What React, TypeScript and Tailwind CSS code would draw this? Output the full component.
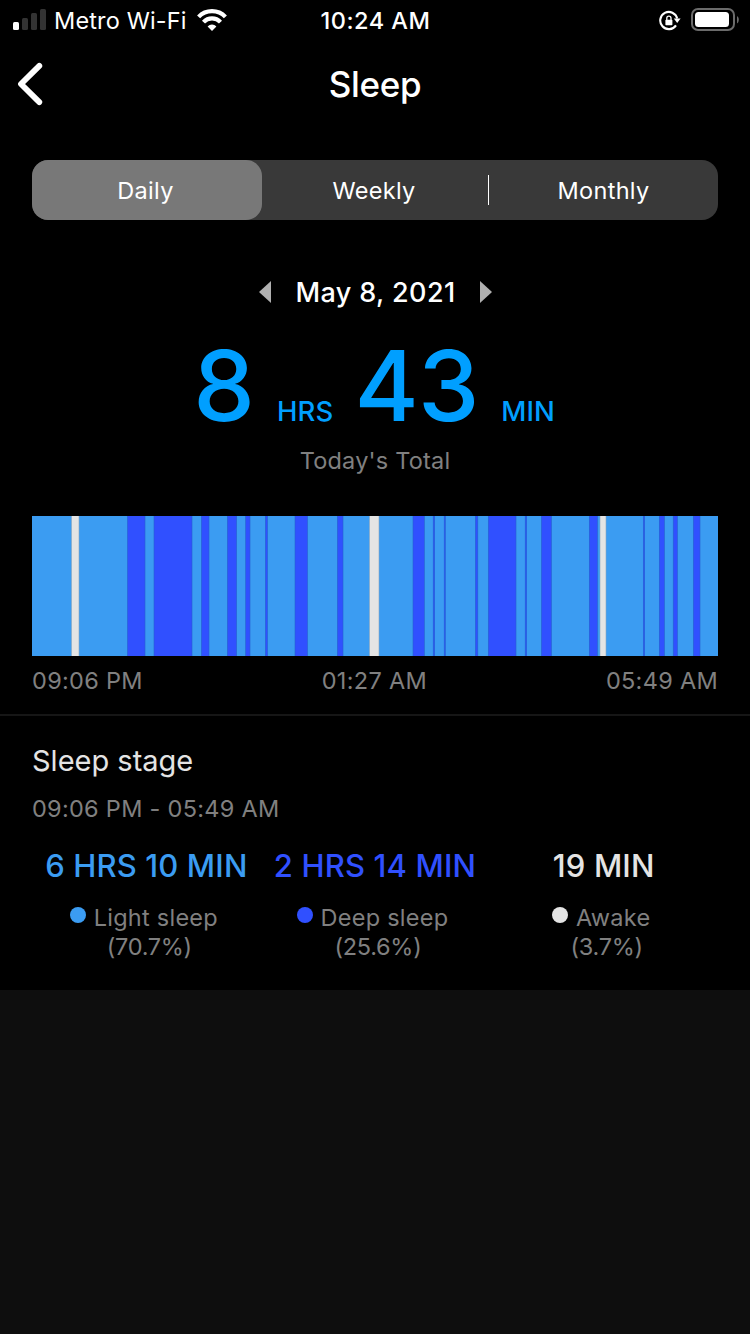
import { useState } from "react";

type Stage = "deep" | "awake";

const stageColors = {
  deep: "#3050ff",
  awake: "#e4e4e4",
};

const edgeColors = {
  deep: "#2560d0",
  awake: "#8aa6bd",
};

// everything that is not listed here is light sleep
const segments: [number, number, Stage][] = [
  [39.5, 47, "awake"],
  [95.5, 113, "deep"],
  [122, 160, "deep"],
  [169.4, 177, "deep"],
  [195.4, 204.6, "deep"],
  [213.7, 218, "deep"],
  [233.4, 235.5, "deep"],
  [263, 275.5, "deep"],
  [305.4, 311, "deep"],
  [337.5, 347, "awake"],
  [381, 392.3, "deep"],
  [401.2, 402.7, "deep"],
  [412.2, 413.3, "deep"],
  [443.4, 445.8, "deep"],
  [456.3, 484, "deep"],
  [493.2, 494.7, "deep"],
  [509.4, 519.4, "deep"],
  [557.3, 565.4, "deep"],
  [568, 574, "awake"],
  [611.3, 612.7, "deep"],
  [627.3, 632.4, "deep"],
  [641.2, 645.4, "deep"],
  [661.3, 668, "deep"],
];

const stages = [
  {
    name: "Light sleep",
    value: "6 HRS 10 MIN",
    percent: "(70.7%)",
    text: "text-[#3b9cf2]",
    dot: "bg-[#3b9cf2]",
  },
  {
    name: "Deep sleep",
    value: "2 HRS 14 MIN",
    percent: "(25.6%)",
    text: "text-[#3050ff]",
    dot: "bg-[#3050ff]",
  },
  {
    name: "Awake",
    value: "19 MIN",
    percent: "(3.7%)",
    text: "text-[#e4e4e4]",
    dot: "bg-[#e4e4e4]",
  },
];

const tabs = [
  { name: "Daily", className: "w-[230px] pr-[3px]" },
  { name: "Weekly", className: "w-[226px] pr-[2px]" },
  { name: "Monthly", className: "w-[230px]" },
];

function StatusBar() {
  return (
    <div className="flex h-[41px] items-center justify-between pr-[11px] pl-[13px] text-white">
      <div className="flex w-[299px] items-center">
        <svg width="33" height="21" viewBox="0 0 33 21" className="mr-[8px] mb-[2px]">
          <rect x="0" y="13" width="6" height="8" rx="1.5" fill="#fff" />
          <rect x="9" y="9" width="6" height="12" rx="1.5" fill="#333" />
          <rect x="18" y="4" width="6" height="17" rx="1.5" fill="#333" />
          <rect x="27" y="0" width="6" height="21" rx="1.5" fill="#333" />
        </svg>
        <span className="text-[23.5px] tracking-[0.15px]">Metro Wi-Fi</span>
        <svg width="30" height="22" viewBox="0 0 30 22" className="mb-px ml-[10px]">
          <g fill="none" stroke="#fff" strokeWidth="4.2">
            <path d="M1.600 7.900a18.600 18.600 0 0 1 26.800 0" />
            <path d="M6.500 13.100a11.700 11.700 0 0 1 17 0" />
          </g>
          <path d="M15 22l-4.400-4.600a6.200 6.200 0 0 1 8.800 0z" fill="#fff" />
        </svg>
      </div>
      <span className="text-[23.5px] font-medium tracking-[0.5px]">
        10:24 AM
      </span>
      <div className="flex w-[300px] items-center justify-end">
        <svg width="22" height="22" viewBox="0 0 22 22" className="mr-[10px]">
          <path
            d="M17 15.300A8.600 8.600 0 1 1 18.200 8.500"
            fill="none"
            stroke="#fff"
            strokeWidth="2.1"
          />
          <path d="M14.800 8.500h6.800l-3.400 4.400z" fill="#fff" />
          <rect x="6.400" y="9.800" width="7" height="5.400" rx="0.8" fill="#fff" />
          <path
            d="M7.800 10V8.200a2.100 2.100 0 0 1 4.200 0V10"
            fill="none"
            stroke="#fff"
            strokeWidth="1.3"
          />
        </svg>
        <svg width="48" height="23" viewBox="0 0 48 23" className="mb-[2px]">
          <rect
            x="1"
            y="1"
            width="42"
            height="21"
            rx="6"
            fill="none"
            stroke="#6b6b6b"
            strokeWidth="2"
          />
          <rect x="4" y="4" width="34" height="15" rx="3.5" fill="#fff" />
          <path d="M46 8c2.400 1.400 2.400 6 0 7.400z" fill="#6b6b6b" />
        </svg>
      </div>
    </div>
  );
}

function Header() {
  return (
    <header className="grid h-[86px] grid-cols-[1fr_auto_1fr] items-center text-white">
      <button className="pl-[17px]" aria-label="Back">
        <svg width="28" height="44" viewBox="0 0 28 44">
          <path
            d="M22.300 3.900L4 22l18.300 18.100"
            fill="none"
            stroke="#fff"
            strokeWidth="5.8"
            strokeLinecap="round"
            strokeLinejoin="round"
          />
        </svg>
      </button>
      <h1 className="text-[35px] font-medium tracking-[-0.3px]">Sleep</h1>
    </header>
  );
}

function Tabs() {
  const [active, setActive] = useState("Daily");

  return (
    <div className="mx-8 mt-[33px] flex h-[60px] items-center rounded-2xl bg-[#393939] text-[23.5px] leading-[30px] tracking-[0.3px] text-white">
      {tabs.map((tab) => (
        <button
          key={tab.name}
          onClick={() => setActive(tab.name)}
          className={`${tab.className} ${
            tab.name === active
              ? "h-full rounded-2xl bg-[#787878] pt-[2px]"
              : "h-[30px] border-white pt-px last:border-l"
          }`}
        >
          {tab.name}
        </button>
      ))}
    </div>
  );
}

function Total() {
  return (
    <section className="flex flex-col items-center">
      <div className="mt-[52px] flex h-[40px] items-center pl-px">
        <svg width="12" height="22" viewBox="0 0 12 22">
          <path d="M12 0v22L0 11z" fill="#b0b0b0" />
        </svg>
        <span className="mx-[24px] h-[40px] text-[27px] leading-[41px] font-medium tracking-[0.4px] text-white">
          May 8, 2021
        </span>
        <svg width="12" height="22" viewBox="0 0 12 22">
          <path d="M0 0v22l12-11z" fill="#b0b0b0" />
        </svg>
      </div>
      <div className="mt-[24px] flex h-[100px] items-baseline pr-[2px] text-[#009fff]">
        <span className="text-[98px] leading-[100px] font-medium tracking-[-1px]">8</span>
        <span className="mr-[21px] ml-[23px] text-[27.5px] font-[450] tracking-[0.2px]">HRS</span>
        <span className="text-[98px] leading-[100px] font-medium tracking-[-1px]">43</span>
        <span className="ml-[23px] text-[27.5px] font-[450]">MIN</span>
      </div>
      <p className="mt-[10px] text-[23.5px] leading-[30px] tracking-[0.2px] text-[#808080]">
        Today's Total
      </p>
    </section>
  );
}

function Chart() {
  return (
    <section className="border-b-2 border-[#161616] px-8 pt-[40px] pb-[18px]">
      <svg width="686" height="140" viewBox="0 0 686 140" className="block">
        <rect width="686" height="140" fill="#3b9cf2" />
        {segments.map(([from, to, stage]) => (
          <rect
            key={from}
            x={from}
            y="-1"
            width={to - from}
            height="142"
            fill={stageColors[stage]}
            stroke={edgeColors[stage]}
            strokeWidth="0.6"
          />
        ))}
      </svg>
      <div className="mt-[10px] flex justify-between text-[23.5px] leading-[30px] tracking-[0.3px] text-[#808080]">
        <span>09:06 PM</span>
        <span>01:27 AM</span>
        <span>05:49 AM</span>
      </div>
    </section>
  );
}

function SleepStage() {
  return (
    <section className="px-8 pt-[25px]">
      <h2 className="text-[29px] leading-[40px] text-[#e4e4e4]">Sleep stage</h2>
      <p className="mt-[13px] text-[23.5px] leading-[30px] tracking-[0.28px] text-[#808080]">
        09:06 PM - 05:49 AM
      </p>
      <div className="mt-[22px] grid grid-cols-3 text-center">
        {stages.map((stage) => (
          <div key={stage.name}>
            <p
              className={`text-[31px] leading-[40px] font-[450] tracking-[0.15px] whitespace-nowrap ${stage.text}`}
            >
              {stage.value}
            </p>
            <div className="mt-[17px] text-[23.5px] leading-[29px] text-[#808080]">
              <p className="flex justify-center pr-[5px] tracking-[0.25px]">
                <span className={`mt-[4px] mr-[8px] size-4 rounded-full ${stage.dot}`} />
                {stage.name}
              </p>
              <p className="pl-[6px] tracking-[-0.3px]">{stage.percent}</p>
            </div>
          </div>
        ))}
      </div>
    </section>
  );
}

export default function App() {
  return (
    <div className="min-h-screen bg-[#0e0e0e] font-['Inter','Liberation_Sans',sans-serif]">
      <div className="h-[990px] bg-black">
        <StatusBar />
        <Header />
        <Tabs />
        <Total />
        <Chart />
        <SleepStage />
      </div>
    </div>
  );
}
